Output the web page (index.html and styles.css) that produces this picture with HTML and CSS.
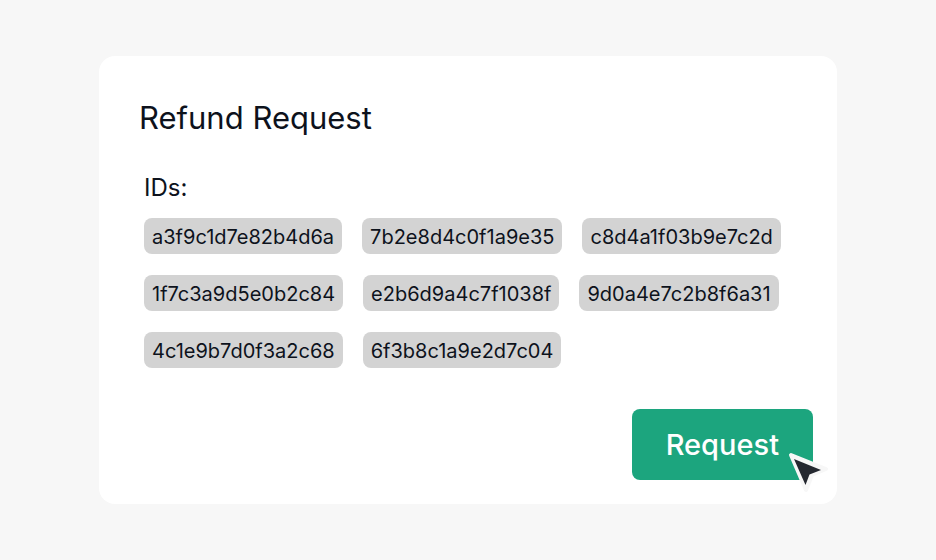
FILE: index.html
```
<!DOCTYPE html>
<html lang="en">
  <head>
    <meta charset="utf-8">
    <meta name="viewport" content="width=device-width, initial-scale=1">
    <title>Refund Request</title>
    <link rel="stylesheet" href="styles.css">
  </head>
  <body>
    <form class="card">
      <h1 class="card__title">Refund Request</h1>
      <div class="ids">
        <h2 class="ids__label" id="ids-label">IDs:</h2>
        <ul class="ids__list" aria-labelledby="ids-label">
          <li class="ids__item">a3f9c1d7e82b4d6a</li>
          <li class="ids__item">7b2e8d4c0f1a9e35</li>
          <li class="ids__item">c8d4a1f03b9e7c2d</li>
          <li class="ids__item">1f7c3a9d5e0b2c84</li>
          <li class="ids__item">e2b6d9a4c7f1038f</li>
          <li class="ids__item">9d0a4e7c2b8f6a31</li>
          <li class="ids__item">4c1e9b7d0f3a2c68</li>
          <li class="ids__item">6f3b8c1a9e2d7c04</li>
        </ul>
      </div>
      <div class="card__actions">
        <button class="button" type="button">Request</button>
        <svg class="cursor" viewBox="0 0 42 42" aria-hidden="true">
          <path class="cursor__edge" d="M3 3 L38 17 L24 23 L18 38 Z"/>
          <path class="cursor__arrow" d="M6 7 L33 18 L21.5 22.5 L17.5 33 Z"/>
        </svg>
      </div>
    </form>
  </body>
</html>
```

FILE: styles.css
```
* {
  box-sizing: border-box;
}
body {
  margin: 0;
  padding: 56px 24px;
  background: #f7f7f7;
  color: #0d121c;
  font-family: Inter, "Open Sans", sans-serif;
}

.card {
  max-width: 738px;
  margin: 0 auto;
  padding: 40px 24px 24px 40px;
  background: #fff;
  border-radius: 16px;
}
.card__title {
  margin: 0;
  font-size: 31px;
  font-weight: 400;
  line-height: 44px;
}
.card__actions {
  position: relative;
  width: fit-content;
  margin: 41px 0 0 auto;
}

.ids {
  margin-top: 32px;
  padding: 0 5px;
}
.ids__label {
  margin: 0;
  font-size: 24px;
  font-weight: 400;
  line-height: 32px;
}
.ids__list {
  display: flex;
  flex-wrap: wrap;
  gap: 21px 20px;
  margin: 14px 0 0;
  padding: 0;
  list-style: none;
}
.ids__item {
  padding: 2px 8px 0;
  background: #d3d3d3;
  border-radius: 8px;
  font-size: 20px;
  line-height: 34px;
}

.button {
  display: block;
  padding: 1px 34px 0;
  background: #1ca57e;
  border: 0;
  border-radius: 8px;
  color: #fff;
  font: inherit;
  font-size: 29px;
  font-weight: 500;
  line-height: 70px;
  cursor: pointer;
}

.cursor {
  position: absolute;
  right: -17px;
  bottom: -14px;
  width: 42px;
  height: 42px;
  pointer-events: none;
}
.cursor__edge {
  fill: #f7f7f7;
  stroke: #f7f7f7;
  stroke-width: 4;
  stroke-linejoin: round;
}
.cursor__arrow {
  fill: #252830;
}
```
